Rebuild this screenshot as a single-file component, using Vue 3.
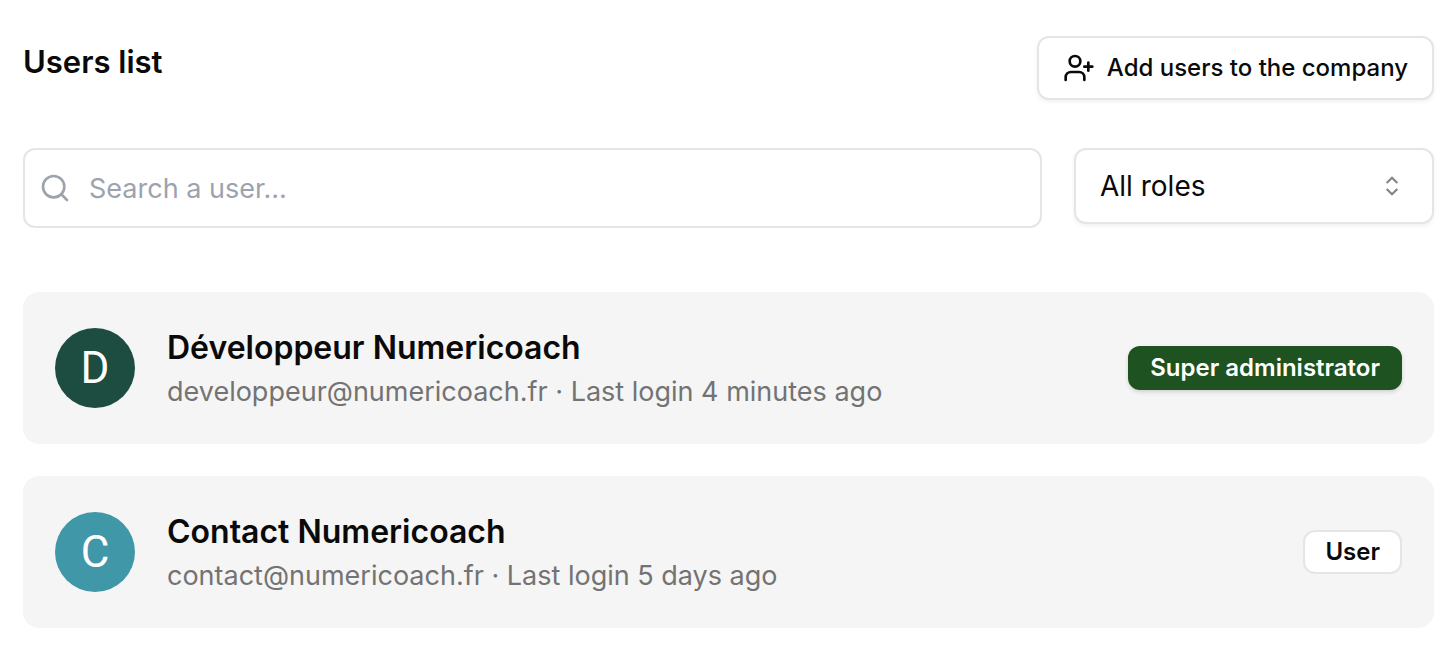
<script setup>
import { ref, computed } from 'vue'

const query = ref('')
const role = ref('all')
const users = [
  { name: 'Développeur Numericoach', initial: 'D', email: 'developpeur@numericoach.fr', login: '4 minutes ago', role: 'Super administrator', kind: 'admin' },
  { name: 'Contact Numericoach', initial: 'C', email: 'contact@numericoach.fr', login: '5 days ago', role: 'User', kind: 'user' },
]
const shown = computed(() => users.filter(u =>
  (role.value === 'all' || role.value === u.kind) &&
  (u.name + u.email).toLowerCase().includes(query.value.toLowerCase())))
</script>

<template>
  <main class="page">
    <header class="head">
      <h1>Users list</h1>
      <button class="add" type="button">
        <svg width="32" height="32" viewBox="0 0 24 24" fill="none" stroke="currentColor" stroke-width="2" stroke-linecap="round" stroke-linejoin="round" aria-hidden="true">
          <path d="M16 21v-2a4 4 0 0 0-4-4H6a4 4 0 0 0-4 4v2" /><circle cx="9" cy="7" r="4" /><path d="M19 8v6M22 11h-6" />
        </svg>
        <span>Add users to the company</span>
      </button>
    </header>
    <div class="filters">
      <div class="search">
        <svg width="32" height="32" viewBox="0 0 24 24" fill="none" stroke="currentColor" stroke-width="2" stroke-linecap="round" stroke-linejoin="round" aria-hidden="true">
          <circle cx="11" cy="11" r="8" /><path d="m21 21-4.300-4.300" />
        </svg>
        <input v-model="query" type="text" placeholder="Search a user..." aria-label="Search a user">
      </div>
      <div class="roles">
        <select v-model="role" aria-label="Role">
          <option value="all">All roles</option>
          <option value="admin">Super administrator</option>
          <option value="user">User</option>
        </select>
        <svg width="32" height="32" viewBox="0 0 15 15" aria-hidden="true">
          <path fill="none" stroke="currentColor" stroke-width="1" d="M5 6.100 7.500 3.600 10 6.100M5 8.900 7.500 11.400 10 8.900" />
        </svg>
      </div>
    </div>
    <ul class="list">
      <li v-for="u in shown" :key="u.email" class="card">
        <span class="avatar" :class="u.kind">{{ u.initial }}</span>
        <div class="info">
          <h2>{{ u.name }}</h2>
          <p>{{ u.email }} · Last login {{ u.login }}</p>
        </div>
        <span class="badge" :class="u.kind">{{ u.role }}</span>
      </li>
    </ul>
  </main>
</template>

<style>
body { background: #fff; }
</style>

<style scoped>
* { box-sizing: border-box; }
.page { padding: 36px 15px 24px 23px; font-family: Inter, "Liberation Sans", sans-serif; color: #0a0a0a; }
h1, h2, p, ul { margin: 0; padding: 0; }
.head { display: flex; justify-content: space-between; align-items: flex-start; }
h1 { font-size: 31px; line-height: 52px; font-weight: 600; }
.add { display: flex; align-items: center; gap: 12px; height: 64px; padding: 0 24px; border: 2px solid #e5e5e5; border-radius: 12px; background: #fff; color: inherit; font: 500 24px/32px Inter, sans-serif; box-shadow: 0 2px 4px rgba(0, 0, 0, .06); }
.filters { display: flex; align-items: flex-start; gap: 32px; margin-top: 48px; }
.search { position: relative; flex: 1; }
.search svg { position: absolute; left: 16px; top: 24px; color: #9ca3af; }
.search input { display: block; width: 100%; height: 80px; padding: 0 24px 0 64px; border: 2px solid #e5e5e5; border-radius: 12px; background: #fff; color: inherit; font: 400 27px/40px Inter, sans-serif; }
.search input::placeholder { color: #9ca3af; opacity: 1; }
.roles { position: relative; width: 360px; }
.roles select { appearance: none; display: block; width: 100%; height: 76px; padding: 0 64px 0 24px; border: 2px solid #e5e5e5; border-radius: 12px; background: #fff; color: inherit; font: 400 28px/40px Inter, sans-serif; box-shadow: 0 2px 4px rgba(0, 0, 0, .06); }
.roles svg { position: absolute; right: 26px; top: 22px; color: #848484; pointer-events: none; }
.list { display: flex; flex-direction: column; gap: 32px; margin-top: 64px; list-style: none; }
.card { display: flex; align-items: center; min-height: 152px; padding: 0 32px; border-radius: 16px; background: #f5f5f5; }
.avatar { display: grid; place-items: center; width: 80px; height: 80px; border-radius: 50%; color: #fff; font: 400 44px/80px Roboto, sans-serif; }
.avatar.admin { background: #1d4d40; }
.avatar.user { background: #4097a8; }
.info { flex: 1; margin-left: 32px; }
h2 { font-size: 32px; line-height: 48px; font-weight: 600; }
.info p { font-size: 27px; line-height: 40px; color: #737373; }
.badge { height: 44px; padding: 0 20px; border: 2px solid #e5e5e5; border-radius: 12px; font-size: 24px; line-height: 40px; font-weight: 600; background: #fff; }
.badge.admin { border-color: #1e5221; background: #1e5221; color: #fff; box-shadow: 0 2px 4px rgba(0, 0, 0, .15); }
</style>
